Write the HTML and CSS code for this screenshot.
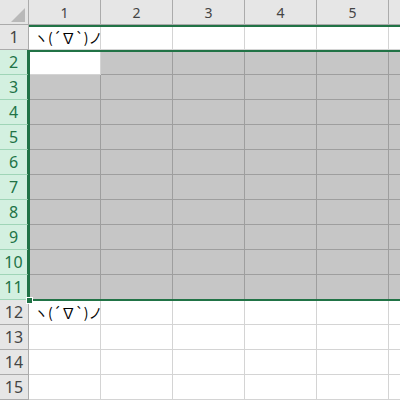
FILE: index.html
```html
<!DOCTYPE html>
<html lang="ja">
<head>
  <meta charset="UTF-8">
  <title>Sheet</title>
  <link rel="stylesheet" href="styles.css">
</head>
<body>
  <div class="sheet">
    <div class="grid">
      <div class="corner">
        <svg width="28" height="24" viewBox="0 0 28 24"><polygon points="25,8 25,22 11,22" fill="#b9b9b9"/></svg>
      </div>
      <div class="col-head">1</div>
      <div class="col-head">2</div>
      <div class="col-head">3</div>
      <div class="col-head">4</div>
      <div class="col-head">5</div>
      <div class="col-head"></div>

      <div class="row-head">1</div>
      <div class="cell text">ヽ(´∇`)ノ</div>
      <div class="cell"></div><div class="cell"></div><div class="cell"></div><div class="cell"></div><div class="cell"></div>

      <div class="row-head sel">2</div>
      <div class="cell"></div>
      <div class="cell gray"></div><div class="cell gray"></div><div class="cell gray"></div><div class="cell gray"></div><div class="cell gray"></div>

      <div class="row-head sel">3</div>
      <div class="cell gray"></div><div class="cell gray"></div><div class="cell gray"></div><div class="cell gray"></div><div class="cell gray"></div><div class="cell gray"></div>
      <div class="row-head sel">4</div>
      <div class="cell gray"></div><div class="cell gray"></div><div class="cell gray"></div><div class="cell gray"></div><div class="cell gray"></div><div class="cell gray"></div>
      <div class="row-head sel">5</div>
      <div class="cell gray"></div><div class="cell gray"></div><div class="cell gray"></div><div class="cell gray"></div><div class="cell gray"></div><div class="cell gray"></div>
      <div class="row-head sel">6</div>
      <div class="cell gray"></div><div class="cell gray"></div><div class="cell gray"></div><div class="cell gray"></div><div class="cell gray"></div><div class="cell gray"></div>
      <div class="row-head sel">7</div>
      <div class="cell gray"></div><div class="cell gray"></div><div class="cell gray"></div><div class="cell gray"></div><div class="cell gray"></div><div class="cell gray"></div>
      <div class="row-head sel">8</div>
      <div class="cell gray"></div><div class="cell gray"></div><div class="cell gray"></div><div class="cell gray"></div><div class="cell gray"></div><div class="cell gray"></div>
      <div class="row-head sel">9</div>
      <div class="cell gray"></div><div class="cell gray"></div><div class="cell gray"></div><div class="cell gray"></div><div class="cell gray"></div><div class="cell gray"></div>
      <div class="row-head sel">10</div>
      <div class="cell gray"></div><div class="cell gray"></div><div class="cell gray"></div><div class="cell gray"></div><div class="cell gray"></div><div class="cell gray"></div>
      <div class="row-head sel">11</div>
      <div class="cell gray"></div><div class="cell gray"></div><div class="cell gray"></div><div class="cell gray"></div><div class="cell gray"></div><div class="cell gray"></div>

      <div class="row-head">12</div>
      <div class="cell text">ヽ(´∇`)ノ</div>
      <div class="cell"></div><div class="cell"></div><div class="cell"></div><div class="cell"></div><div class="cell"></div>
      <div class="row-head">13</div>
      <div class="cell"></div><div class="cell"></div><div class="cell"></div><div class="cell"></div><div class="cell"></div><div class="cell"></div>
      <div class="row-head">14</div>
      <div class="cell"></div><div class="cell"></div><div class="cell"></div><div class="cell"></div><div class="cell"></div><div class="cell"></div>
      <div class="row-head">15</div>
      <div class="cell"></div><div class="cell"></div><div class="cell"></div><div class="cell"></div><div class="cell"></div><div class="cell"></div>
    </div>

    <div class="row-line"></div>
    <div class="selection"></div>
    <div class="handle"></div>
  </div>
</body>
</html>
```

FILE: styles.css
```css
* {
  margin: 0;
  padding: 0;
  box-sizing: border-box;
}

body {
  background: #fff;
  overflow: hidden;
  font-family: "Noto Sans", "Noto Sans CJK JP", sans-serif;
}

.sheet {
  position: relative;
  width: 400px;
  height: 400px;
  overflow: hidden;
}

.grid {
  display: grid;
  grid-template-columns: 29px repeat(6, 72px);
  grid-auto-rows: 25px;
  width: 461px;
}

.corner {
  background: #e6e6e6;
  border-right: 1px solid #ababab;
  border-bottom: 1px solid #ababab;
}

.col-head {
  background: #e6e6e6;
  border-right: 1px solid #ababab;
  border-bottom: 1px solid #ababab;
  color: #444;
  font-size: 14px;
  display: flex;
  align-items: center;
  justify-content: center;
}

.row-head {
  background: #e6e6e6;
  border-right: 1px solid #ababab;
  border-bottom: 1px solid #ababab;
  color: #444;
  font-size: 16px;
  display: flex;
  align-items: center;
  justify-content: center;
}

.row-head.sel {
  background: #d3f0e0;
  color: #217346;
  border-bottom-color: #9fd5b7;
  border-right: 2px solid #217346;
}

.cell {
  border-right: 1px solid #d4d4d4;
  border-bottom: 1px solid #d4d4d4;
  background: #fff;
}

.cell.gray {
  background: #c6c6c6;
  border-right-color: #9e9e9e;
  border-bottom-color: #9e9e9e;
}

.cell.text {
  position: relative;
  z-index: 1;
  font-family: "Noto Sans CJK JP", sans-serif;
  font-size: 14px;
  color: #000;
  padding-left: 5px;
  display: flex;
  align-items: center;
  white-space: nowrap;
}

.row-line {
  position: absolute;
  z-index: 2;
  left: 29px;
  top: 25px;
  width: 380px;
  height: 2px;
  background: #217346;
}

.selection {
  position: absolute;
  z-index: 2;
  left: 28px;
  top: 50px;
  width: 380px;
  height: 251px;
  border: 2px solid #217346;
  border-right: none;
}

.handle {
  position: absolute;
  z-index: 3;
  left: 26px;
  top: 297px;
  width: 7px;
  height: 7px;
  background: #217346;
  border: 1px solid #fff;
}
```
